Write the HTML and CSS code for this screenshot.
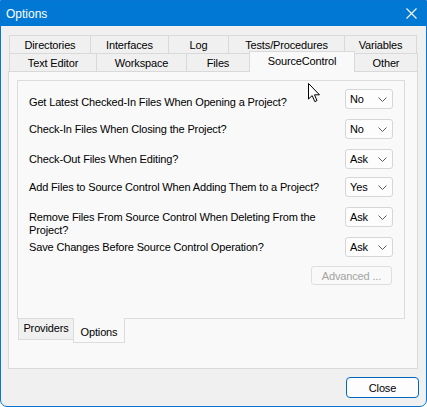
FILE: index.html
```html
<!DOCTYPE html>
<html>
<head>
<meta charset="utf-8">
<link rel="stylesheet" href="styles.css">
</head>
<body>
<div class="window">
  <div class="titlebar">
    <span class="title">Options</span>
    <svg class="xicon" width="11" height="11" viewBox="0 0 11 11"><path d="M0.5 0.5 L10.5 10.5 M10.5 0.5 L0.5 10.5" stroke="#fff" stroke-width="1.1" fill="none"/></svg>
  </div>
  <div class="main">
    <div class="tabs">
      <div class="tabrow row1">
        <div class="tab w81">Directories</div>
        <div class="tab w78">Interfaces</div>
        <div class="tab w60">Log</div>
        <div class="tab w116">Tests/Procedures</div>
        <div class="tab w73 last">Variables</div>
      </div>
      <div class="tabrow row2">
        <div class="tab w87">Text Editor</div>
        <div class="tab w90">Workspace</div>
        <div class="tab w63">Files</div>
        <div class="tab w105 sel">SourceControl</div>
        <div class="tab w64 last">Other</div>
      </div>
    </div>
    <div class="panel">
      <div class="inner-page">
        <div class="row first">
          <div class="label">Get Latest Checked-In Files When Opening a Project?</div>
          <div class="combo"><span>No</span><svg width="9" height="5" viewBox="0 0 9 5"><path d="M0.5 0.5 L4.5 4.5 L8.5 0.5" stroke="#5a5a5a" fill="none" stroke-width="1"/></svg></div>
        </div>
        <div class="row">
          <div class="label">Check-In Files When Closing the Project?</div>
          <div class="combo"><span>No</span><svg width="9" height="5" viewBox="0 0 9 5"><path d="M0.5 0.5 L4.5 4.5 L8.5 0.5" stroke="#5a5a5a" fill="none" stroke-width="1"/></svg></div>
        </div>
        <div class="row short">
          <div class="label">Check-Out Files When Editing?</div>
          <div class="combo"><span>Ask</span><svg width="9" height="5" viewBox="0 0 9 5"><path d="M0.5 0.5 L4.5 4.5 L8.5 0.5" stroke="#5a5a5a" fill="none" stroke-width="1"/></svg></div>
        </div>
        <div class="row">
          <div class="label">Add Files to Source Control When Adding Them to a Project?</div>
          <div class="combo"><span>Yes</span><svg width="9" height="5" viewBox="0 0 9 5"><path d="M0.5 0.5 L4.5 4.5 L8.5 0.5" stroke="#5a5a5a" fill="none" stroke-width="1"/></svg></div>
        </div>
        <div class="row">
          <div class="label">Remove Files From Source Control When Deleting From the<br>Project?</div>
          <div class="combo"><span>Ask</span><svg width="9" height="5" viewBox="0 0 9 5"><path d="M0.5 0.5 L4.5 4.5 L8.5 0.5" stroke="#5a5a5a" fill="none" stroke-width="1"/></svg></div>
        </div>
        <div class="row last">
          <div class="label">Save Changes Before Source Control Operation?</div>
          <div class="combo"><span>Ask</span><svg width="9" height="5" viewBox="0 0 9 5"><path d="M0.5 0.5 L4.5 4.5 L8.5 0.5" stroke="#5a5a5a" fill="none" stroke-width="1"/></svg></div>
        </div>
        <div class="advrow">
          <div class="adv">Advanced ...</div>
        </div>
      </div>
      <div class="btabs">
        <div class="btab prov">Providers</div>
        <div class="btab opt">Options</div>
      </div>
    </div>
    <div class="footer">
      <div class="closebtn">Close</div>
    </div>
  </div>
  <svg class="cursor" width="13" height="20" viewBox="0 0 13 20"><path d="M0.5 0.5 L0.5 16 L4.2 12.6 L6.8 18.6 L9 17.6 L6.5 11.8 L11.5 11.8 Z" fill="#fff" stroke="#000" stroke-width="1" stroke-linejoin="round"/></svg>
</div>
</body>
</html>
```
FILE: styles.css
```css
* { box-sizing: border-box; margin: 0; padding: 0; }
html, body { margin: 0; width: 427px; height: 407px; overflow: hidden; background: #ffffff; }
body { font-family: "Liberation Sans", Arial, sans-serif; font-size: 11px; color: #000; letter-spacing: -0.15px; }

.window {
  position: relative;
  width: 427px; height: 407px;
  border: 1px solid #0a74d2;
  border-radius: 0 0 7px 7px;
  background: #f0f0f0;
  overflow: hidden;
  display: flex; flex-direction: column;
}
.titlebar {
  height: 25px; flex: none;
  background: #0078d4; color: #fff;
  display: flex; align-items: center; justify-content: space-between;
  padding: 0 9px 0 5px;
  font-size: 12px; letter-spacing: 0;
}
.title { padding-top: 0px; }
.xicon { display: block; }

.main { flex: 1; padding: 9px 0 0 7px; display: flex; flex-direction: column; }

.tabs { width: 410px; }
.tabrow { display: flex; height: 18px; padding-left: 1px; align-items: flex-end; }
.tab {
  height: 18px;
  border-top: 1px solid #d9d9d9; border-left: 1px solid #d9d9d9;
  background: #f0f0f0;
  display: flex; align-items: center; justify-content: center;
  white-space: nowrap; flex: none;
}
.tab.last { border-right: 1px solid #d9d9d9; }
.row1 .tab { padding-top: 1px; }
.tab.sel {
  position: relative; z-index: 1;
  height: 21px; margin-bottom: -1px; margin-right: -1px;
  width: 106px;
  border-right: 1px solid #d9d9d9;
  background: #f9f9f9;
  padding-bottom: 3px;
}
.w81 { width: 81px; } .w78 { width: 78px; } .w60 { width: 60px; } .w116 { width: 116px; } .w73 { width: 73px; }
.w87 { width: 87px; } .w90 { width: 90px; } .w63 { width: 63px; } .w105 { width: 105px; } .w64 { width: 64px; }

.panel {
  width: 410px; height: 298px;
  border: 1px solid #d9d9d9;
  background: #f9f9f9;
  padding: 8px 12px 0 8px;
}
.inner-page {
  width: 388px; height: 239px;
  border: 1px solid #dcdcdc;
  background: #f9f9f9;
  padding: 8px 11px 0 11px;
}
.row { display: flex; justify-content: space-between; align-items: flex-start; height: 30px; }
.row.short { height: 28px; }
.row.last { height: 29px; }
.label { padding-top: 4px; line-height: 13px; }
.row.first .label { padding-top: 7px; }
.combo {
  width: 48px; height: 20px; flex: none;
  background: #fdfdfd;
  border: 1px solid #d6d6d6; border-radius: 3px;
  display: flex; align-items: center; justify-content: space-between;
  padding: 0 5px 0 4px;
}
.combo svg { display: block; }
.advrow { display: flex; justify-content: flex-end; padding-right: 1px; }
.adv {
  width: 81px; height: 19px;
  border: 1px solid #dedede; border-radius: 3px;
  background: #f9f9f9; color: #a3a3a3;
  display: flex; align-items: center; justify-content: center;
}

.btabs { display: flex; padding-left: 1px; align-items: flex-start; }
.btab { display: flex; justify-content: center; flex: none; }
.prov {
  width: 55px; height: 21px;
  border-left: 1px solid #dcdcdc; border-bottom: 1px solid #dcdcdc;
  background: #f0f0f0;
  padding-top: 3px;
}
.opt {
  position: relative; z-index: 1;
  width: 52px; height: 25px; margin-top: -1px;
  border-left: 1px solid #dcdcdc; border-right: 1px solid #dcdcdc; border-bottom: 1px solid #dcdcdc;
  background: #f9f9f9;
  padding-top: 8px;
}

.footer { display: flex; justify-content: flex-end; padding-right: 7px; margin-top: 8px; }
.closebtn {
  width: 73px; height: 21px;
  border: 1px solid #0067c0; border-radius: 4px;
  background: #fdfdfd;
  display: flex; align-items: center; justify-content: center;
}

.cursor { position: absolute; left: 307px; top: 82px; }
```
